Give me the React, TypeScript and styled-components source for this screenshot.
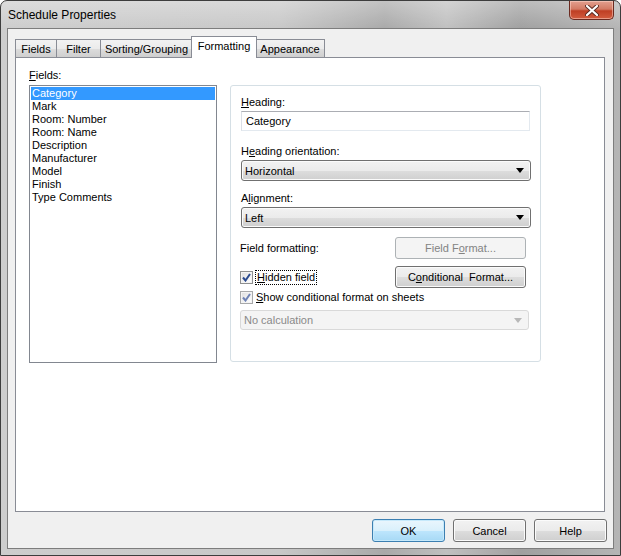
import React from 'react';
import styled, { createGlobalStyle, css } from 'styled-components';

const GlobalStyle = createGlobalStyle`
  html, body {
    margin: 0;
    padding: 0;
    background: #ffffff;
  }
  body {
    font-family: "Liberation Sans", Arial, sans-serif;
    font-size: 11px;
    color: #000;
  }
  * {
    box-sizing: border-box;
  }
`;

const fields = [
  'Category',
  'Mark',
  'Room: Number',
  'Room: Name',
  'Description',
  'Manufacturer',
  'Model',
  'Finish',
  'Type Comments',
];

const tabs = [
  { label: 'Fields', width: 42 },
  { label: 'Filter', width: 45 },
  { label: 'Sorting/Grouping', width: 93 },
  { label: 'Formatting', width: 66, active: true },
  { label: 'Appearance', width: 70 },
];

const DropArrow: React.FC<{ disabled?: boolean }> = ({ disabled }) => (
  <svg width="8" height="5" viewBox="0 0 8 5">
    <path d="M0 0 H8 L4 5 Z" fill={disabled ? '#b8b8b8' : '#000'} />
  </svg>
);

const CheckMark: React.FC<{ faded?: boolean }> = ({ faded }) => (
  <svg width="9" height="9" viewBox="0 0 9 9">
    <path
      d="M1 4.5 L3.5 7.5 L8 1"
      fill="none"
      stroke={faded ? '#6f83b5' : '#2a4a8f'}
      strokeWidth="2"
    />
  </svg>
);

const App: React.FC = () => {
  return (
    <>
      <GlobalStyle />
      <Window>
        <TitleBar>
          <Title>Schedule Properties</Title>
          <CloseButton>
            <svg width="14" height="11" viewBox="0 0 14 11">
              <path d="M2 1 L12 10 M12 1 L2 10" stroke="#5a2a22" strokeWidth="4" strokeLinecap="round" />
              <path d="M2 1 L12 10 M12 1 L2 10" stroke="#ffffff" strokeWidth="2.2" strokeLinecap="round" />
            </svg>
          </CloseButton>
        </TitleBar>

        <Client>
          <TabStrip>
            {tabs.map((tab) => (
              <Tab key={tab.label} $active={tab.active} $width={tab.width}>
                {tab.label}
              </Tab>
            ))}
          </TabStrip>

          <TabPanel>
            <FieldsColumn>
              <Label $bottom={3}>
                <u>F</u>ields:
              </Label>
              <ListBox>
                {fields.map((field, idx) => (
                  <ListItem key={field} $selected={idx === 0}>
                    {field}
                  </ListItem>
                ))}
              </ListBox>
            </FieldsColumn>

            <GroupBox>
              <Label>
                <u>H</u>eading:
              </Label>
              <TextInput>Category</TextInput>

              <Label $top={14}>
                H<u>e</u>ading orientation:
              </Label>
              <Combo>
                <span>Horizontal</span>
                <DropArrow />
              </Combo>

              <Label $top={11}>
                A<u>l</u>ignment:
              </Label>
              <Combo>
                <span>Left</span>
                <DropArrow />
              </Combo>

              <OptionRow $top={9}>
                <PlainText>Field formatting:</PlainText>
                <PushButton disabled>
                  Field F<u>o</u>rmat...
                </PushButton>
              </OptionRow>

              <OptionRow $top={7}>
                <CheckLabel>
                  <CheckBox>
                    <CheckMark />
                  </CheckBox>
                  <FocusText>
                    <u>H</u>idden field
                  </FocusText>
                </CheckLabel>
                <PushButton>
                  C<u>o</u>nditional&nbsp; Format...
                </PushButton>
              </OptionRow>

              <CheckLabel $top={3}>
                <CheckBox $faded>
                  <CheckMark faded />
                </CheckBox>
                <span>
                  <u>S</u>how conditional format on sheets
                </span>
              </CheckLabel>

              <Combo $top={6} $disabled>
                <span>No calculation</span>
                <DropArrow disabled />
              </Combo>
            </GroupBox>
          </TabPanel>

          <Footer>
            <PushButton $default>OK</PushButton>
            <PushButton>Cancel</PushButton>
            <PushButton>Help</PushButton>
          </Footer>
        </Client>
      </Window>
    </>
  );
};

const Window = styled.div`
  width: 621px;
  height: 556px;
  display: flex;
  flex-direction: column;
  padding: 0 6px 6px 6px;
  border: 1px solid #3d3d3d;
  border-radius: 7px 7px 0 0;
  background:
    linear-gradient(180deg, rgba(255, 255, 255, 0.3) 0px, rgba(255, 255, 255, 0) 28px),
    linear-gradient(90deg, #cdcdcd 0%, #c8c8c8 45%, #a9a9a9 62%, #c0c0c0 72%, #a0a0a0 84%, #b5b5b5 100%);
`;

const TitleBar = styled.div`
  height: 27px;
  display: flex;
  align-items: flex-start;
  justify-content: space-between;
`;

const Title = styled.div`
  font-size: 12px;
  line-height: 14px;
  padding: 7px 0 0 1px;
  color: #000;
`;

const CloseButton = styled.div`
  width: 45px;
  height: 19px;
  display: flex;
  align-items: center;
  justify-content: center;
  border: 1px solid #6b2a20;
  border-top: none;
  border-radius: 0 0 5px 5px;
  background: linear-gradient(180deg, #e3a08f 0%, #d37a64 45%, #bf3f24 55%, #d25c3f 100%);
  box-shadow: inset 0 0 0 1px rgba(255, 220, 210, 0.5);
`;

const Client = styled.div`
  flex: 1;
  display: flex;
  flex-direction: column;
  background: #f0f0f0;
  border: 1px solid #7d7d7d;
  padding: 7px 8px 6px 7px;
`;

const TabStrip = styled.div`
  height: 21px;
  display: flex;
  align-items: flex-end;
`;

const Tab = styled.div<{ $active?: boolean; $width: number }>`
  width: ${({ $width }) => $width}px;
  margin-left: -1px;
  display: flex;
  justify-content: center;
  border: 1px solid #898c95;
  border-bottom: none;
  color: #000;
  ${({ $active }) =>
    $active
      ? css`
          height: 22px;
          margin-bottom: -1px;
          padding-top: 3px;
          background: #ffffff;
          position: relative;
          z-index: 1;
          margin-left: -2px;
          margin-right: -1px;
        `
      : css`
          height: 18px;
          padding-top: 3px;
          background: linear-gradient(180deg, #f2f2f2 0%, #ebebeb 50%, #dddddd 51%, #cfcfcf 100%);
        `}

  &:first-child {
    margin-left: 0;
  }
`;

const TabPanel = styled.div`
  flex: 1;
  display: grid;
  grid-template-columns: 188px 311px;
  column-gap: 13px;
  align-items: start;
  background: #ffffff;
  border: 1px solid #898c95;
  padding: 11px 0 0 13px;
`;

const FieldsColumn = styled.div`
  display: flex;
  flex-direction: column;
`;

const Label = styled.div<{ $top?: number; $bottom?: number }>`
  line-height: 13px;
  margin-top: ${({ $top }) => $top ?? 0}px;
  margin-bottom: ${({ $bottom }) => $bottom ?? 2}px;
`;

const ListBox = styled.div`
  height: 278px;
  border: 1px solid #828790;
  padding: 1px;
  background: #ffffff;
`;

const ListItem = styled.div<{ $selected?: boolean }>`
  height: 13px;
  line-height: 13px;
  padding-left: 1px;
  white-space: nowrap;
  ${({ $selected }) =>
    $selected &&
    css`
      background: #3399ff;
      color: #ffffff;
    `}
`;

const GroupBox = styled.div`
  margin-top: 16px;
  height: 277px;
  border: 1px solid #d5dfe5;
  border-radius: 3px;
  padding: 10px 0 0 10px;
  display: flex;
  flex-direction: column;
`;

const TextInput = styled.div`
  width: 289px;
  height: 20px;
  line-height: 18px;
  padding-left: 4px;
  border: 1px solid #e3e9ef;
  border-top-color: #abadb3;
  border-left-color: #dbdfe6;
  background: #ffffff;
`;

const Combo = styled.div<{ $top?: number; $disabled?: boolean }>`
  width: 290px;
  height: 21px;
  margin-top: ${({ $top }) => $top ?? 0}px;
  display: flex;
  align-items: center;
  justify-content: space-between;
  padding: 0 6px 0 3px;
  border-radius: 3px;
  ${({ $disabled }) =>
    $disabled
      ? css`
          width: 289px;
          height: 20px;
          margin-left: -1px;
          border: 1px solid #d9d9d9;
          background: #f4f4f4;
          color: #8a8a8a;
        `
      : css`
          border: 1px solid #707070;
          background: linear-gradient(180deg, #f2f2f2 0%, #ebebeb 50%, #dddddd 51%, #cfcfcf 100%);
          box-shadow: inset 0 0 0 1px #fbfbfb;
        `}
`;

const OptionRow = styled.div<{ $top?: number }>`
  width: 286px;
  margin-top: ${({ $top }) => $top ?? 0}px;
  margin-left: -1px;
  display: flex;
  align-items: center;
  justify-content: space-between;
`;

const PlainText = styled.span`
  line-height: 13px;
`;

const CheckLabel = styled.label<{ $top?: number }>`
  display: flex;
  align-items: center;
  gap: 3px;
  margin-top: ${({ $top }) => $top ?? 0}px;
  margin-left: ${({ $top }) => ($top !== undefined ? -1 : 0)}px;
  line-height: 13px;
`;

const CheckBox = styled.span<{ $faded?: boolean }>`
  width: 13px;
  height: 13px;
  display: flex;
  align-items: center;
  justify-content: center;
  border: 1px solid ${({ $faded }) => ($faded ? '#a8a9aa' : '#8e8f8f')};
  background: linear-gradient(135deg, #dcdcdc 0%, #f4f4f4 60%, #ffffff 100%);
  box-shadow: inset 0 0 0 1px #f4f4f4;
`;

const FocusText = styled.span`
  outline: 1px dotted #000;
  outline-offset: 0;
  padding: 0 1px;
`;

const PushButton = styled.button<{ $default?: boolean }>`
  width: 73px;
  height: 23px;
  padding: 0;
  font-family: inherit;
  font-size: 11px;
  color: #000;
  border: 1px solid #707070;
  border-radius: 3px;
  background: linear-gradient(180deg, #f2f2f2 0%, #ebebeb 50%, #dddddd 51%, #cfcfcf 100%);
  box-shadow: inset 0 0 0 1px #fbfbfb;

  ${OptionRow} & {
    width: 131px;
    height: 22px;
  }

  &:disabled {
    color: #838383;
    border-color: #adb2b5;
    background: #f4f4f4;
    box-shadow: none;
  }

  ${({ $default }) =>
    $default &&
    css`
      border-color: #3c7fb1;
      background: linear-gradient(180deg, #eaf6fd 0%, #d9f0fc 50%, #bee6fd 51%, #a7d9f5 100%);
      box-shadow: inset 0 0 0 1px #c6e9fb;
    `}
`;

const Footer = styled.div`
  margin-top: 7px;
  margin-right: -2px;
  display: flex;
  justify-content: flex-end;
  gap: 8px;
`;

export default App;
